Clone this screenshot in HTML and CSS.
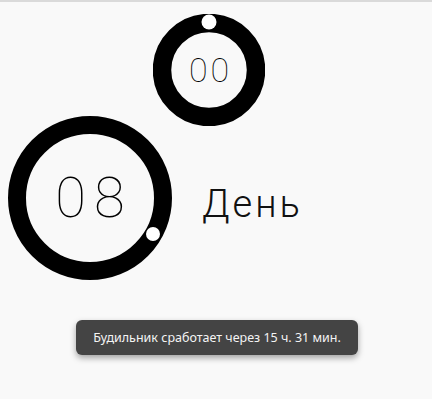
FILE: index.html
```html
<!DOCTYPE html>
<html lang="ru">
<head>
  <meta charset="UTF-8">
  <title>Будильник</title>
  <link rel="stylesheet" href="styles.css">
</head>
<body>

  <div class="topline"></div>

  <div class="screen">
    <div class="row-minutes">
      <div class="dial dial-small">
        <svg width="112" height="112" viewBox="0 0 112 112">
          <circle cx="56" cy="56" r="47" fill="none" stroke="#000" stroke-width="18.5"/>
          <circle cx="56" cy="8" r="7.5" fill="#fff"/>
        </svg>
        <span class="num num-small">00</span>
      </div>
    </div>

    <div class="row-hours">
      <div class="dial dial-big">
        <svg width="164" height="164" viewBox="0 0 164 164">
          <circle cx="82" cy="82" r="73" fill="none" stroke="#000" stroke-width="18"/>
          <circle cx="145" cy="118" r="7" fill="#fff"/>
        </svg>
        <span class="num num-big">08</span>
      </div>
      <div class="day">День</div>
    </div>
  </div>

  <div class="toast">Будильник сработает через 15 ч. 31 мин.</div>

</body>
</html>
```

FILE: styles.css
```css
body {
  margin: 0;
  padding: 0;
  background-color: #f9f9f9;
  font-family: Roboto, "Liberation Sans", sans-serif;
  height: 399px;
  overflow: hidden;
}

.topline {
  height: 2px;
  background-color: #dadada;
}

.screen {
  padding-top: 12px;
}

.row-minutes {
  padding-left: 153px;
}

.dial {
  display: grid;
  place-items: center;
  width: fit-content;
}

.dial svg,
.dial .num {
  grid-area: 1 / 1;
}

.dial svg {
  display: block;
}

.num {
  font-weight: 100;
  color: #000;
  line-height: 1;
}

.num-small {
  font-size: 34px;
  letter-spacing: 3px;
  padding-left: 3px;
}

.num-big {
  font-size: 56px;
  letter-spacing: 8px;
  padding-left: 8px;
}

.row-hours {
  display: flex;
  align-items: center;
  margin-top: -10px;
  padding-left: 8px;
}

.day {
  margin-left: 30px;
  margin-top: 12px;
  font-size: 38px;
  font-weight: 300;
  letter-spacing: 3px;
  color: #111;
}

.toast {
  width: 282px;
  height: 35px;
  margin: 40px 0 0 76px;
  box-sizing: border-box;
  background-color: #444;
  border-radius: 6px;
  box-shadow: 0 3px 6px rgba(0, 0, 0, 0.35);
  color: #f4f4f4;
  font-family: "Noto Sans", "Open Sans", sans-serif;
  font-size: 12.5px;
  display: flex;
  align-items: center;
  justify-content: center;
}
```
